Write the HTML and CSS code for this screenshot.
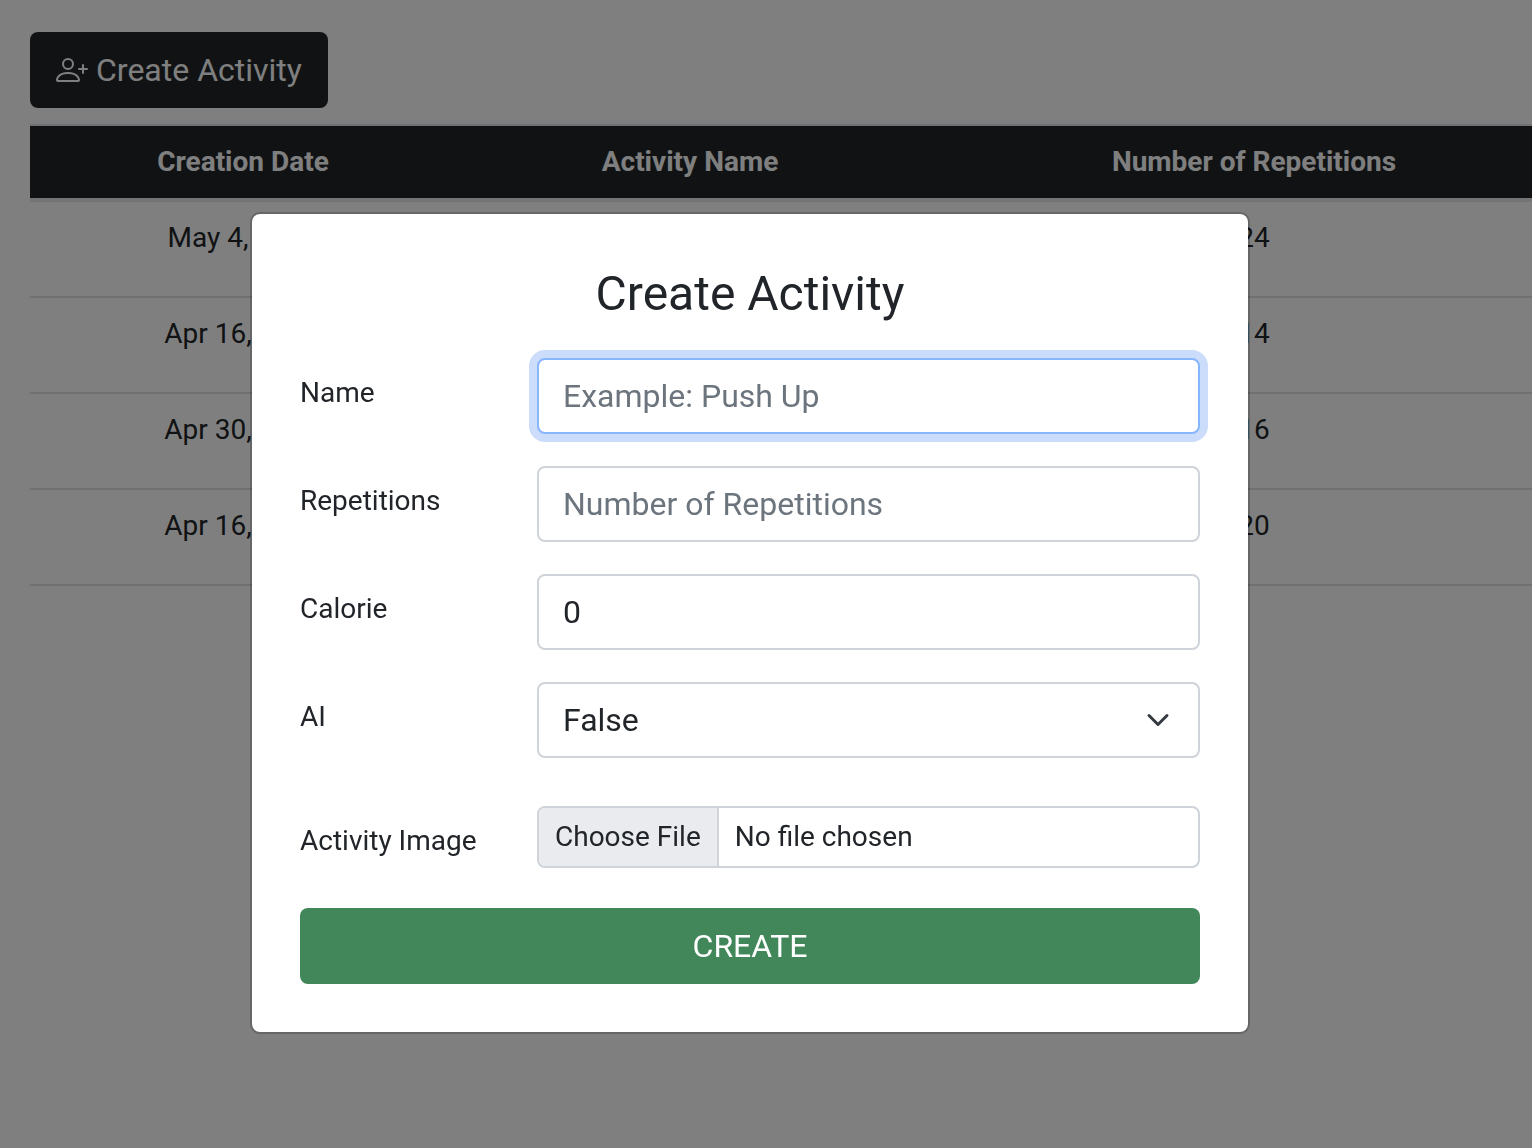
FILE: index.html
```html
<!DOCTYPE html>
<html>

<head>
    <meta charset="UTF-8">
    <meta name="viewport" content="width=device-width, initial-scale=1.0">
    <title>Activities</title>
    <link rel="stylesheet" href="styles.css">
</head>

<body>
    <div class="page">
        <button class="open-btn" type="button">
            <svg class="open-icon" viewBox="0 0 16 16" fill="currentColor">
                <path d="M6 8a3 3 0 1 0 0-6 3 3 0 0 0 0 6zm2-3a2 2 0 1 1-4 0 2 2 0 0 1 4 0zm4 8c0 1-1 1-1 1H1s-1 0-1-1 1-4 6-4 6 3 6 4zm-1-.004c-.001-.246-.154-.986-.832-1.664C9.516 10.68 8.289 10 6 10c-2.29 0-3.516.68-4.168 1.332-.678.678-.83 1.418-.832 1.664h10z" />
                <path d="M13.5 5a.5.5 0 0 1 .5.5V7h1.5a.5.5 0 0 1 0 1H14v1.5a.5.5 0 0 1-1 0V8h-1.5a.5.5 0 0 1 0-1H13V5.5a.5.5 0 0 1 .5-.5z" />
            </svg>
            Create Activity
        </button>

        <div class="table">
            <div class="row head">
                <div>Creation Date</div>
                <div>Activity Name</div>
                <div>Number of Repetitions</div>
            </div>
            <div class="row">
                <div>May 4, 2023</div>
                <div></div>
                <div>24</div>
            </div>
            <div class="row">
                <div>Apr 16, 2023</div>
                <div></div>
                <div>14</div>
            </div>
            <div class="row">
                <div>Apr 30, 2023</div>
                <div></div>
                <div>16</div>
            </div>
            <div class="row">
                <div>Apr 16, 2023</div>
                <div></div>
                <div>20</div>
            </div>
        </div>
    </div>

    <div class="overlay">
        <form class="modal">
            <h2 class="modal-title">Create Activity</h2>

            <div class="field">
                <label for="name">Name</label>
                <input class="control focused" id="name" type="text" placeholder="Example: Push Up">
            </div>
            <div class="field">
                <label for="reps">Repetitions</label>
                <input class="control" id="reps" type="text" placeholder="Number of Repetitions">
            </div>
            <div class="field">
                <label for="calorie">Calorie</label>
                <input class="control" id="calorie" type="text" value="0">
            </div>
            <div class="field">
                <label for="ai">AI</label>
                <select class="control select" id="ai">
                    <option>False</option>
                    <option>True</option>
                </select>
            </div>
            <div class="field file-field">
                <label for="image">Activity Image</label>
                <input class="file" id="image" type="file">
            </div>

            <button class="create-btn" type="button">CREATE</button>
        </form>
    </div>
</body>

</html>
```

FILE: styles.css
```css
* {
    box-sizing: border-box;
}

html,
body {
    height: 100%;
}

body {
    margin: 0;
    overflow: hidden;
    background-color: #fff;
    color: #212529;
    font-family: Roboto, "Liberation Sans", sans-serif;
    font-size: 28px;
}

.page {
    padding: 32px 0 0 30px;
}

.open-btn {
    display: flex;
    align-items: center;
    gap: 8px;
    height: 76px;
    padding: 0 26px;
    border: none;
    border-radius: 8px;
    background-color: #212529;
    color: #fff;
    font-family: inherit;
    font-size: 32px;
}

.open-icon {
    width: 32px;
    height: 32px;
}

.table {
    width: 1554px;
    margin-top: 16px;
    border-top: 2px solid #dee2e6;
}

.row {
    display: grid;
    grid-template-columns: 426px 468px 660px;
    height: 96px;
    padding-top: 15px;
    border-bottom: 2px solid #dee2e6;
    text-align: center;
    line-height: 42px;
}

.head {
    height: 72px;
    padding-top: 15px;
    border-bottom: none;
    background-color: #212529;
    color: #fff;
    font-weight: 700;
}

.head + .row {
    height: 100px;
    padding-top: 15px;
    border-top: 4px solid #e9e9e9;
}

.overlay {
    position: fixed;
    top: 0;
    right: 0;
    bottom: 0;
    left: 0;
    display: flex;
    justify-content: center;
    align-items: flex-start;
    padding-top: 212px;
    padding-right: 32px;
    background-color: rgba(0, 0, 0, 0.5);
}

.modal {
    flex-shrink: 0;
    width: 1000px;
    height: 822px;
    padding: 50px 48px 0;
    border: 2px solid rgba(0, 0, 0, 0.2);
    border-radius: 10px;
    background-color: #fff;
    background-clip: padding-box;
}

.modal-title {
    margin: 0 0 34px;
    text-align: center;
    font-size: 48px;
    font-weight: 400;
    line-height: 60px;
}

.field {
    display: grid;
    grid-template-columns: 237px 663px;
    margin-bottom: 32px;
}

.field label {
    padding-top: 14px;
    line-height: 42px;
}

.control {
    width: 100%;
    height: 76px;
    padding: 0 24px;
    border: 2px solid #ced4da;
    border-radius: 8px;
    outline: none;
    background-color: #fff;
    color: #212529;
    font-family: inherit;
    font-size: 32px;
}

.control::placeholder {
    color: #6c757d;
    opacity: 1;
}

.focused {
    border-color: #86b7fe;
    box-shadow: 0 0 0 8px #ccdcfb;
}

.select {
    appearance: none;
    background-image: url("data:image/svg+xml,%3csvg xmlns='http://www.w3.org/2000/svg' viewBox='0 0 16 16'%3e%3cpath fill='none' stroke='%23343a40' stroke-linecap='round' stroke-linejoin='round' stroke-width='2' d='M2 5l6 6 6-6'/%3e%3c/svg%3e");
    background-repeat: no-repeat;
    background-position: right 24px center;
    background-size: 32px 24px;
}

.file-field {
    margin-top: 48px;
    margin-bottom: 40px;
}

.file {
    width: 100%;
    height: 62px;
    overflow: hidden;
    border: 2px solid #ced4da;
    border-radius: 8px;
    color: #212529;
    font-family: inherit;
    font-size: 28px;
    line-height: 58px;
}

.file::file-selector-button {
    height: 66px;
    margin: -4px 16px -4px 0;
    padding: 0 16px 2px;
    border: none;
    border-right: 2px solid #ced4da;
    border-radius: 0;
    background-color: #e9ebef;
    color: #212529;
    font-family: inherit;
    font-size: 28px;
}

.create-btn {
    display: block;
    width: 100%;
    height: 76px;
    border: none;
    border-radius: 8px;
    background-color: #41875a;
    color: #fff;
    font-family: inherit;
    font-size: 32px;
}
```
